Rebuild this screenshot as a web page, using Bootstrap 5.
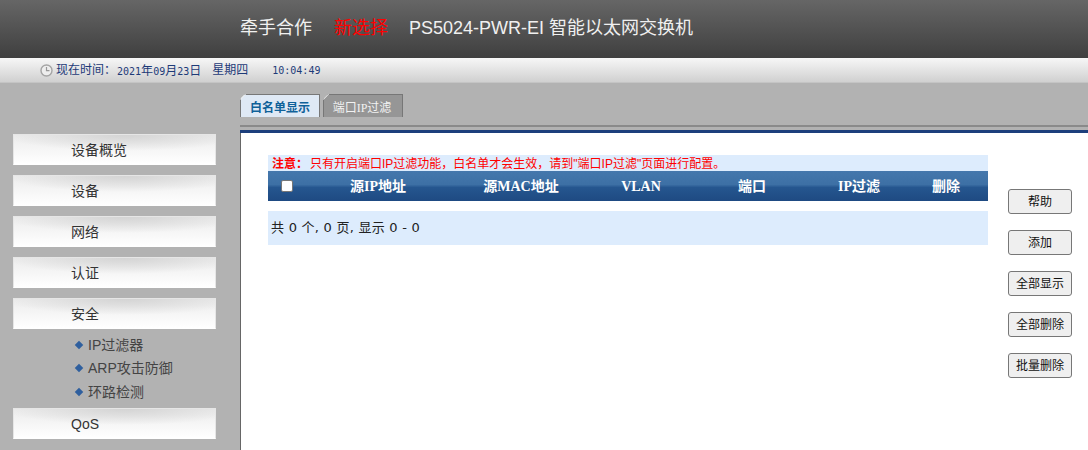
<!DOCTYPE html>
<html lang="zh">
<head>
    <meta charset="UTF-8">
    <meta name="viewport" content="width=device-width, initial-scale=1.0">
    <title>PS5024-PWR-EI</title>
    <link href="https://cdn.jsdelivr.net/npm/bootstrap@5.3.0/dist/css/bootstrap.min.css" rel="stylesheet">
    <style>
        html, body { height: 450px; overflow: hidden; }
        body { background: #fff; font-family: "Liberation Sans", "Noto Sans CJK SC", sans-serif; font-size: 13px; color: #222; }
        .top-head { height: 58px; padding-left: 240px; background: linear-gradient(#666 0%, #3f3f3f 100%); color: #f0f0f0; font-size: 18px; line-height: 57px; }
        .top-head .brand-red { color: #f00; margin: 0 21px 0 22px; }
        .date-bar { height: 25px; padding-left: 40px; gap: 3px; background: linear-gradient(#f7f7f7, #d0d0d0); border-bottom: 1px solid #c4c4c4; color: #1d3a78; font-size: 12px; }
        .date-bar .mono-time { font-family: "DejaVu Sans Mono", "Noto Sans CJK SC", monospace; font-size: 10px; }
        .date-bar .mono-time i { font-family: "Noto Sans CJK SC", sans-serif; font-size: 12px; font-style: normal; }
        .date-day { margin-left: -2px; }
        .date-week { margin-left: 8px; }
        .date-clock { margin-left: 21px; }
        .main-wrap { height: 367px; }
        .side-col { width: 241px; flex: none; background: #b2b2b2; padding: 51px 0 0 13px; border-right: 1px solid #666; }
        .side-item { display: block; width: 203px; height: 31px; margin-bottom: 10px; padding-left: 57px; border: 1px solid #e6e6e6; border-bottom-color: #fff; background: radial-gradient(ellipse 60% 55% at 55% 0%, #d4d4d4, rgba(212,212,212,0) 100%), linear-gradient(#ececec, #fff); color: #333; font-size: 14px; line-height: 30px; }
        .side-sub { list-style: none; margin: -5px 0 4px; padding: 0 0 0 62px; color: #444; font-size: 14px; line-height: 23.4px; }
        .side-sub li::before { content: ""; display: inline-block; width: 6px; height: 6px; margin: 0 6px 2px 1px; background: #2f5f9e; transform: rotate(45deg); }
        .right-col { flex: 1; min-width: 0; background: #fff; }
        .tab-zone { height: 50px; background: #b2b2b2; margin-left: -1px; padding-top: 11px; }
        .tab-strip { height: 23px; }
        .page-tab { position: relative; width: 80px; height: 23px; margin-right: 3px; border: 1px solid #777; border-bottom: 0; text-align: center; font-family: "Liberation Serif", "Noto Sans CJK SC", serif; font-size: 12px; line-height: 26px; clip-path: polygon(5px 0, 100% 0, 100% 100%, 0 100%, 0 5px); }
        .page-tab::before { content: ""; position: absolute; left: -2px; top: 1px; width: 8px; height: 1px; background: #eee; transform: rotate(-45deg); }
        .page-tab.on { background: #dfe9f5; color: #0f6199; font-weight: 700; }
        .page-tab.off { background: #969696; color: #f2f2f2; padding-right: 2px; }
        .rule-grey { height: 2px; margin-top: 8px; background: #8a8a8a; }
        .rule-navy { height: 3px; margin-top: 3px; background: #1d3f7c; }
        .content-wrap { padding: 22px 16px 0 27px; }
        .table-area { width: 720px; }
        .note-line { height: 16px; background: #ddecfd; padding-left: 4px; color: #f00; font-size: 12px; line-height: 18px; white-space: nowrap; }
        .note-line b { margin-right: 2px; }
        .list-head { height: 30px; margin: 0; color: #fff; table-layout: fixed; width: 720px; }
        .list-head th { padding: 0; border: 0; text-align: center; font-family: "Liberation Serif", "Noto Sans CJK SC", serif; font-size: 14px; font-weight: 700; color: #fff; background: linear-gradient(#4477ac 0%, #3d70a5 45%, #25568f 55%, #1e4a82 100%); vertical-align: middle; box-shadow: none; }
        .cw-check { width: 38px; } .cw-ip { width: 144px; } .cw-mac { width: 142px; } .cw-vlan { width: 98px; } .cw-port { width: 124px; } .cw-filter { width: 90px; } .cw-del { width: 84px; }
        .head-box { display: block; width: 12px; height: 12px; margin: 0 0 0 13px; background: #fff; border: 1px solid #777; border-radius: 2px; }
        .page-info { height: 34px; margin-top: 10px; background: #ddecfd; padding-left: 3px; color: #222; font-family: "DejaVu Sans", "Noto Sans CJK SC", sans-serif; font-size: 13px; letter-spacing: .25px; line-height: 34px; }
        .side-btns { margin-top: 34px; margin-left: 20px; gap: 16px; }
        .dev-btn { width: 64px; height: 25px; padding: 1px 0 0; background: #efefef; border: 1px solid #777; border-radius: 3px; color: #111; font-size: 12px; line-height: 22px; }
    </style>
</head>
<body>
    <div class="top-head">牵手合作<span class="brand-red">新选择</span>PS5024-PWR-EI 智能以太网交换机</div>
    <div class="date-bar d-flex align-items-center">
        <svg width="13" height="13" viewBox="0 0 13 13"><circle cx="6.5" cy="6.5" r="5.5" fill="#eee" stroke="#a5a5a5" stroke-width="1.4"/><path d="M6.5 3v3.7h3" fill="none" stroke="#999" stroke-width="1.2"/></svg>
        <span>现在时间&#xFF1A;</span>
        <span class="mono-time date-day">2021<i>年</i>09<i>月</i>23<i>日</i></span>
        <span class="date-week">星期四</span>
        <span class="mono-time date-clock">10:04:49</span>
    </div>
    <div class="main-wrap d-flex">
        <div class="side-col">
            <a class="side-item text-decoration-none">设备概览</a>
            <a class="side-item text-decoration-none">设备</a>
            <a class="side-item text-decoration-none">网络</a>
            <a class="side-item text-decoration-none">认证</a>
            <a class="side-item text-decoration-none">安全</a>
            <ul class="side-sub">
                <li>IP过滤器</li>
                <li>ARP攻击防御</li>
                <li>环路检测</li>
            </ul>
            <a class="side-item text-decoration-none">QoS</a>
        </div>
        <div class="right-col">
            <div class="tab-zone">
                <div class="tab-strip d-flex">
                    <div class="page-tab on">白名单显示</div>
                    <div class="page-tab off">端口IP过滤</div>
                </div>
                <div class="rule-grey"></div>
                <div class="rule-navy"></div>
            </div>
            <div class="content-wrap d-flex">
                <div class="table-area">
                    <div class="note-line"><b>注意&#xFF1A;</b>只有开启端口IP过滤功能&#xFF0C;白名单才会生效&#xFF0C;请到"端口IP过滤"页面进行配置。</div>
                    <table class="table list-head">
                        <colgroup><col class="cw-check"><col class="cw-ip"><col class="cw-mac"><col class="cw-vlan"><col class="cw-port"><col class="cw-filter"><col class="cw-del"></colgroup>
                        <tr>
                            <th><span class="head-box"></span></th>
                            <th>源IP地址</th>
                            <th>源MAC地址</th>
                            <th>VLAN</th>
                            <th>端口</th>
                            <th>IP过滤</th>
                            <th>删除</th>
                        </tr>
                    </table>
                    <div class="page-info">共 0 个, 0 页, 显示 0 - 0</div>
                </div>
                <div class="side-btns d-flex flex-column">
                    <button type="button" class="btn dev-btn">帮助</button>
                    <button type="button" class="btn dev-btn">添加</button>
                    <button type="button" class="btn dev-btn">全部显示</button>
                    <button type="button" class="btn dev-btn">全部删除</button>
                    <button type="button" class="btn dev-btn">批量删除</button>
                </div>
            </div>
        </div>
    </div>
    <script src="https://cdn.jsdelivr.net/npm/bootstrap@5.3.0/dist/js/bootstrap.bundle.min.js"></script>
</body>
</html>
